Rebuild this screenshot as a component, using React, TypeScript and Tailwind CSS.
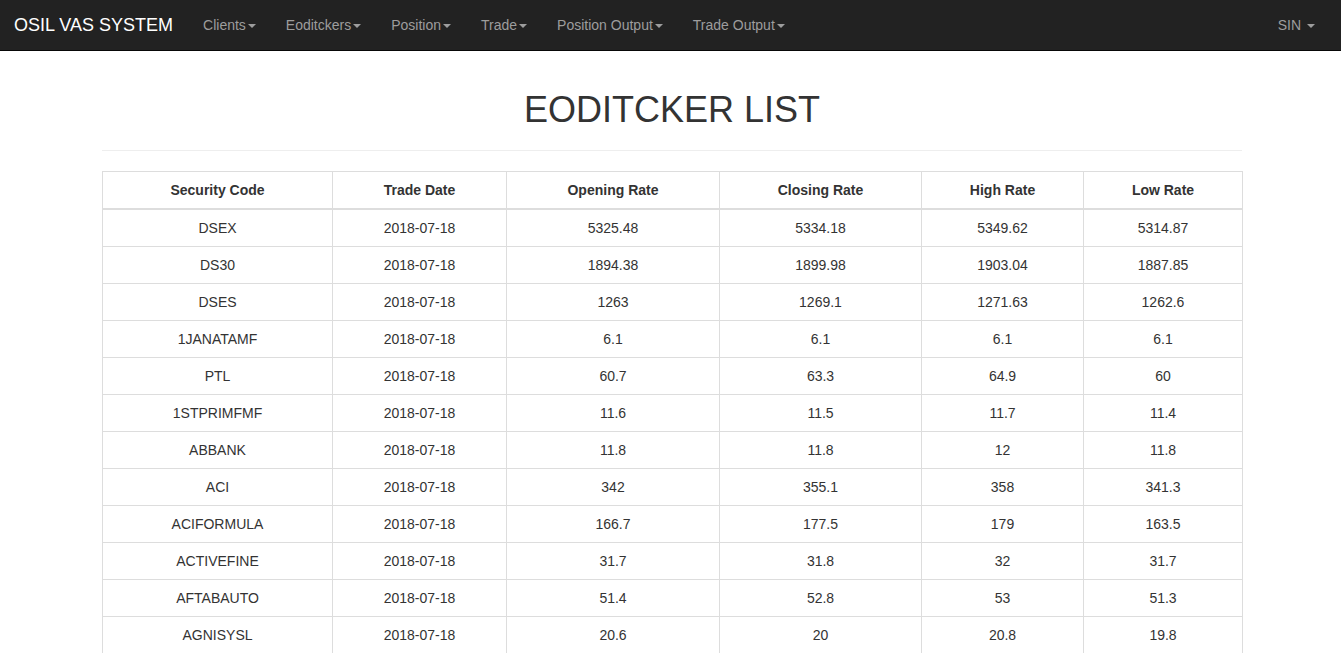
import React from "react";

const menus = ["Clients", "Eoditckers", "Position", "Trade", "Position Output", "Trade Output"];

const rows = [
  ["DSEX", "2018-07-18", "5325.48", "5334.18", "5349.62", "5314.87"],
  ["DS30", "2018-07-18", "1894.38", "1899.98", "1903.04", "1887.85"],
  ["DSES", "2018-07-18", "1263", "1269.1", "1271.63", "1262.6"],
  ["1JANATAMF", "2018-07-18", "6.1", "6.1", "6.1", "6.1"],
  ["PTL", "2018-07-18", "60.7", "63.3", "64.9", "60"],
  ["1STPRIMFMF", "2018-07-18", "11.6", "11.5", "11.7", "11.4"],
  ["ABBANK", "2018-07-18", "11.8", "11.8", "12", "11.8"],
  ["ACI", "2018-07-18", "342", "355.1", "358", "341.3"],
  ["ACIFORMULA", "2018-07-18", "166.7", "177.5", "179", "163.5"],
  ["ACTIVEFINE", "2018-07-18", "31.7", "31.8", "32", "31.7"],
  ["AFTABAUTO", "2018-07-18", "51.4", "52.8", "53", "51.3"],
  ["AGNISYSL", "2018-07-18", "20.6", "20", "20.8", "19.8"],
];

const headers = ["Security Code", "Trade Date", "Opening Rate", "Closing Rate", "High Rate", "Low Rate"];
const widths = ["w-[230px]", "w-[174px]", "w-[213px]", "w-[202px]", "w-[162px]", "w-[159px]"];

function Caret() {
  return (
    <span className="inline-block w-0 h-0 ml-[2px] align-middle border-t-[4px] border-x-[4px] border-b-0 border-t-[#9d9d9d] border-x-transparent" />
  );
}

export default function App() {
  return (
    <div className="min-h-screen bg-white text-[#333] text-[14px] leading-[20px] font-['Liberation_Sans',Arial,sans-serif]">
      <nav className="h-[51px] bg-[#222] border-b border-[#080808] flex items-start justify-between">
        <div className="flex">
          <a className="pl-[14px] pr-[15px] py-[15px] text-[18px] leading-[20px] text-white">OSIL VAS SYSTEM</a>
          <ul className="flex">
            {menus.map((m) => (
              <li key={m} className="px-[15px] py-[15px] text-[#9d9d9d]">
                {m}
                <Caret />
              </li>
            ))}
          </ul>
        </div>
        <div className="px-[15px] py-[15px] mr-[11px] text-[#9d9d9d]">
          SIN <Caret />
        </div>
      </nav>

      <div className="pl-[3px]">
        <div className="w-[1140px] mx-auto">
          <h1 className="mt-[39px] mb-[10px] text-center text-[36px] leading-[39.6px] font-normal text-[#333]">
            EODITCKER LIST
          </h1>
          <hr className="mt-[20px] mb-[20px] border-0 border-t border-[#eee]" />
          <table className="w-full border-collapse border border-[#ddd] table-fixed">
            <colgroup>
              {widths.map((w, i) => (
                <col key={i} className={w} />
              ))}
            </colgroup>
            <thead>
              <tr>
                {headers.map((h) => (
                  <th key={h} className="border border-[#ddd] border-b-2 p-[8px] text-center font-bold">
                    {h}
                  </th>
                ))}
              </tr>
            </thead>
            <tbody>
              {rows.map((r, i) => (
                <tr key={i}>
                  {r.map((c, j) => (
                    <td key={j} className="border border-[#ddd] p-[8px] text-center">
                      {c}
                    </td>
                  ))}
                </tr>
              ))}
            </tbody>
          </table>
        </div>
      </div>
    </div>
  );
}
